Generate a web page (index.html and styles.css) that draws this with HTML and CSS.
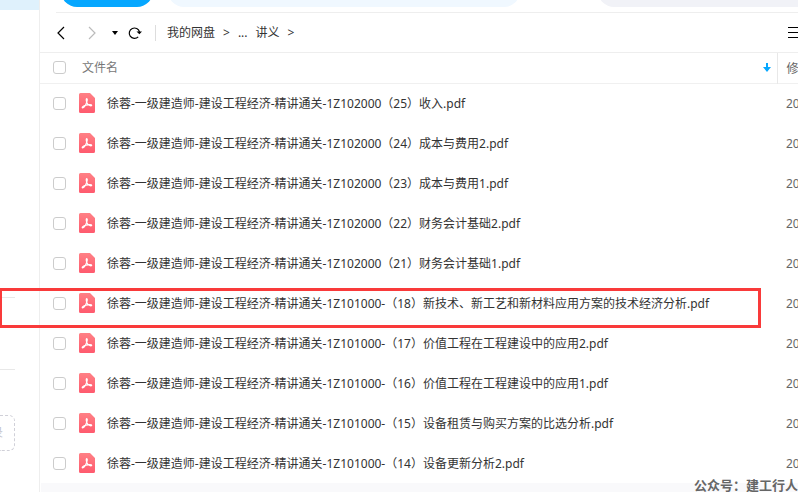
FILE: index.html
```html
<!DOCTYPE html>
<html lang="zh-CN">
 <head>
  <meta charset="utf-8">
  <title>我的网盘</title>
  <link rel="stylesheet" href="styles.css">
  <script src="files.js" defer></script>
 </head>
 <body>

  <aside class="sidebar">
    <div class="active-item"></div>
    <div class="group"></div>
    <div class="group"></div>
    <button class="add-box" aria-label="添加快捷目录"><span>录</span></button>
  </aside>

  <main class="main">
    <div class="topbar">
      <button class="pill upload" aria-label="上传"></button>
      <div class="pill actions"></div>
      <div class="pill search"></div>
    </div>

    <nav class="toolbar">
      <button aria-label="后退"><svg width="16" height="16" viewBox="0 0 16 16"><path d="M11 2L5 8l6 6"/></svg></button>
      <button class="off" aria-label="前进"><svg width="16" height="16" viewBox="0 0 16 16"><path d="M6 2l6 6-6 6"/></svg></button>
      <button class="small" aria-label="历史"><svg width="6" height="4" viewBox="0 0 6 4"><path class="solid" d="M0 0h6L3 4z"/></svg></button>
      <button aria-label="刷新"><svg width="16" height="16" viewBox="0 0 16 16"><path d="M11.200 11.800A5.200 5.200 0 1 1 12.500 7"/><path class="solid" d="M9.500 6.500h5.500L12.400 9.300z"/></svg></button>
      <div class="crumbs">
        <a href="#">我的网盘</a><span>&gt;</span><a href="#">...</a><a href="#">讲义</a><span>&gt;</span>
      </div>
      <button class="view" aria-label="列表"><svg width="12" height="12" viewBox="0 0 12 12"><path d="M0 .5h12M0 5.500h12M0 10.500h12" shape-rendering="crispEdges"/></svg></button>
    </nav>

    <table class="files">
      <thead>
        <tr>
          <th class="check"><input type="checkbox" aria-label="全选"></th>
          <th class="name"><div class="sort">文件名<svg width="8" height="10" viewBox="0 0 8 10"><path d="M3 0h2v4h3L4 9 0 4h3z"/></svg></div></th>
          <th class="date">修</th>
        </tr>
      </thead>
      <tbody id="list"></tbody>
    </table>

    <footer class="footer"></footer>
  </main>

  <div class="marker"></div>
  <div class="watermark">公众号：建工行人</div>

 </body>
</html>
```
FILE: files.js
```js
const prefix = '徐蓉-一级建造师-建设工程经济-精讲通关-';

const files = [
  '1Z102000（25）收入.pdf',
  '1Z102000（24）成本与费用2.pdf',
  '1Z102000（23）成本与费用1.pdf',
  '1Z102000（22）财务会计基础2.pdf',
  '1Z102000（21）财务会计基础1.pdf',
  '1Z101000-（18）新技术、新工艺和新材料应用方案的技术经济分析.pdf',
  '1Z101000-（17）价值工程在工程建设中的应用2.pdf',
  '1Z101000-（16）价值工程在工程建设中的应用1.pdf',
  '1Z101000-（15）设备租赁与购买方案的比选分析.pdf',
  '1Z101000-（14）设备更新分析2.pdf'
];

const pdfIcon = `<svg class="pdf" width="16" height="20" viewBox="0 0 16 20">
  <defs><linearGradient id="red" x2="0" y2="1"><stop stop-color="#ff8085"/><stop offset="1" stop-color="#ff5a6e"/></linearGradient></defs>
  <path fill="url(#red)" d="M1.500 0H11l5 5v13.500a1.500 1.500 0 0 1-1.500 1.500h-13A1.500 1.500 0 0 1 0 18.500v-17A1.500 1.500 0 0 1 1.500 0z"/>
  <path class="mark" d="M7.600 5.500c.9 0 .8 1.600.2 3.400-.8 2.400-2.600 6-4.300 6-.9-.4.500-2 3.500-2.700 2.600-.7 5.600-.8 5.700.1 0 1-2.600.4-4-1.200C7.400 9.600 6.800 5.800 7.600 5.500z"/>
</svg>`;

document.getElementById('list').innerHTML = files.map((file, i) => `
  <tr>
    <td class="check"><input type="checkbox" id="file${i}"></td>
    <td class="name"><label for="file${i}">${pdfIcon}<span>${prefix}${file}</span></label></td>
    <td class="date">20</td>
  </tr>`).join('');
```
FILE: styles.css
```css
*{box-sizing:border-box;margin:0;padding:0}
body{display:flex;min-height:100vh;overflow:hidden;background:#fff;color:#333;font:12px/16px "Noto Sans","Noto Sans CJK SC",sans-serif}
button{border:0;background:none;font:inherit;cursor:pointer}
a{color:inherit;text-decoration:none}

.sidebar{flex:none;width:40px;border-right:1px solid #eee}
.active-item{height:10px;background:#dff1fc}
.group{width:15px;height:72px;border-bottom:1px solid #e8e8e8}
.active-item + .group{height:288px}
.add-box{display:flex;align-items:center;width:15px;height:36px;margin-top:45px;border:1px dashed #d0d0d8;border-left:0;border-radius:0 6px 6px 0;color:#c4c4cc;overflow:hidden}
.add-box span{margin-left:-9px}

.main{flex:1;min-width:0;display:flex;flex-direction:column}
.topbar{display:flex;align-items:flex-end;height:13px;margin-left:16px;padding:0 0 5px 5px;border-bottom:1px solid #eee;overflow:hidden}
.pill{flex:none;height:32px;border-radius:16px}
.upload{width:92px;background:#06a7ff}
.actions{width:352px;margin-left:15px;background:#f0f8ff}
.search{flex:1;min-width:200px;margin-left:78px;border-radius:16px 0 0 16px;background:#f1f2f7}

.toolbar{display:flex;align-items:center;height:40px;padding-left:13px;border-bottom:1px solid #eee;overflow:hidden}
.toolbar button{flex:none;display:flex;width:16px;margin-right:14px}
.toolbar .small{width:6px;margin:0 9px 0 -1px}
.toolbar .view{width:12px;margin:0 -2px 0 auto}
.toolbar svg{fill:none;stroke:#000;stroke-width:1.2}
.toolbar .off svg{stroke:#bbb}
.toolbar .view svg{stroke-width:1}
.toolbar .solid{fill:#000;stroke:none}
.crumbs{display:flex;gap:8px;height:16px;margin-left:-2px;padding-left:11px;border-left:1px solid #ddd}

.files{width:100%;table-layout:fixed;border-collapse:collapse}
.files tr{height:40px}
.files thead tr{height:30px;border-bottom:1px solid #f0f0f0}
.files th{font-weight:normal;text-align:left;color:#777}
.files .check{width:39px;padding-left:13px}
.files .date{width:21px;padding:2px 0 0 9px;color:#666;overflow:hidden;white-space:nowrap}
.files th.date{border-left:1px solid #e8e8e8}
.files input{appearance:none;display:block;width:13px;height:13px;border:1px solid #ccc;border-radius:3px;background:#fff}
.files label{display:flex;align-items:center;white-space:nowrap}
.files label span{padding-top:2px}
.sort{display:flex;align-items:center;justify-content:space-between;padding:0 6px 0 3px}
.sort svg{fill:#06a7ff}
.pdf{flex:none;margin-right:12px}
.mark{fill:none;stroke:#fff;stroke-width:1.2}

.footer{flex:1;min-height:9px;margin-left:1px;background:#f9f9fb}

.marker{position:absolute;left:-1px;top:288px;width:762px;height:40px;border:3px solid #f93a3a}
.watermark{position:absolute;right:0;bottom:0;color:#666;font-weight:bold;font-size:13px;line-height:14px}
```
